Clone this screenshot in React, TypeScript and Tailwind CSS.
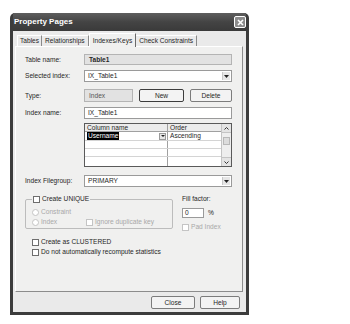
import type { ReactNode } from 'react';

function CheckBox({ disabled }: { disabled?: boolean }) {
  return (
    <span
      className={
        'inline-block h-[7px] w-[7px] shrink-0 border bg-white ' +
        (disabled ? 'border-[#c4c4c4]' : 'border-[#6e6e6e]')
      }
    />
  );
}

function Radio() {
  return <span className="inline-block h-[7px] w-[7px] shrink-0 rounded-full border border-[#c4c4c4] bg-white" />;
}

function Arrow() {
  return (
    <span className="flex h-full w-[8px] items-center justify-center border-l border-[#c8c8c8] bg-[#e6e6e6]">
      <svg width="5" height="3" viewBox="0 0 5 3">
        <path d="M0 0h5L2.5 3z" fill="#222" />
      </svg>
    </span>
  );
}

function Row({ label, children, className }: { label: string; children: ReactNode; className: string }) {
  return (
    <div className={'flex items-center ' + className}>
      <span className="w-[59px] shrink-0">{label}</span>
      {children}
    </div>
  );
}

function Combo({ value }: { value: string }) {
  return (
    <div className="flex h-full flex-1 items-center border border-[#9a9a9a] bg-white p-[1px]">
      <span className="flex-1 pl-[2px]">{value}</span>
      <Arrow />
    </div>
  );
}

function Btn({ label, def, w }: { label: string; def?: boolean; w: string }) {
  return (
    <div
      className={
        'flex h-full items-center justify-center rounded-[2px] bg-[#f3f3f3] ' +
        w +
        (def ? ' border-[1.5px] border-[#3c3c3c]' : ' border border-[#7c7c7c]')
      }
    >
      {label}
    </div>
  );
}

export default function App() {
  return (
    <div className="h-[324px] w-[350px] bg-white pl-[10px] pt-[13px] font-['Liberation_Sans',Arial,sans-serif] text-[6.6px] leading-[8px] text-[#262626]">
      <div className="flex h-[302px] w-[239px] flex-col rounded-t-[5px] bg-[#3c3c3c] px-[3px] pb-[3px]">
        {/* title bar */}
        <div className="flex h-[18px] shrink-0 items-center justify-between bg-gradient-to-b from-[#5e5e5e] via-[#444444] to-[#3a3a3a] pl-[1px]">
          <span className="text-[8px] font-bold text-white">Property Pages</span>
          <span className="flex h-[12px] w-[12px] items-center justify-center rounded-[2px] border border-white bg-[#8c8c8c]">
            <svg width="7" height="7" viewBox="0 0 7 7">
              <path d="M1 1l5 5M6 1L1 6" stroke="#fff" strokeWidth="1.6" />
            </svg>
          </span>
        </div>

        {/* body */}
        <div className="flex flex-1 flex-col bg-[#eaeaea] pl-[2px] pr-[3px] pt-[2px]">
          {/* tabs */}
          <div className="flex h-[13px] items-end pl-[2px]">
            <div className="flex h-[11px] items-center border-l border-t border-white border-r border-r-[#8a8a8a] px-[2px]">Tables</div>
            <div className="flex h-[11px] items-center border-t border-white border-r border-r-[#8a8a8a] px-[3px]">Relationships</div>
            <div className="relative z-10 -mb-[1px] flex h-[14px] items-center border-l border-t border-white border-r border-r-[#6a6a6a] bg-[#f0f0ef] px-[3px]">
              Indexes/Keys
            </div>
            <div className="flex h-[11px] items-center border-t border-white border-r border-r-[#8a8a8a] px-[3px]">Check Constraints</div>
          </div>

          {/* panel */}
          <div className="flex h-[246px] flex-col border border-l-white border-t-white border-r-[#8c8c8c] border-b-[#8c8c8c] bg-[#f0f0ef] pl-[9px] pr-[10px] pt-[7px]">
            <Row label="Table name:" className="h-[11px]">
              <div className="flex h-full flex-1 items-center border border-[#b4b4b4] bg-[#e2e2e2] pl-[4px] font-semibold">Table1</div>
            </Row>
            <Row label="Selected index:" className="mt-[5px] h-[12px]">
              <Combo value="IX_Table1" />
            </Row>
            <Row label="Type:" className="mt-[7px] h-[13px]">
              <div className="flex h-full w-[49px] items-center border border-[#b4b4b4] bg-[#e2e2e2] pl-[4px] text-[#555]">Index</div>
              <div className="ml-[6px] h-full">
                <Btn label="New" def w="w-[45px]" />
              </div>
              <div className="ml-[6px] h-full">
                <Btn label="Delete" w="w-[42px]" />
              </div>
            </Row>
            <Row label="Index name:" className="mt-[5px] h-[12px]">
              <div className="flex h-full flex-1 items-center border border-[#9a9a9a] bg-white pl-[3px]">IX_Table1</div>
            </Row>

            {/* column grid */}
            <div className="ml-[59px] mt-[4px] flex h-[44px] border border-[#5a5a5a] bg-white">
              <div className="flex flex-1 flex-col">
                <div className="flex h-[8px] border-b border-[#a0a0a0] bg-[#ececec]">
                  <span className="w-[83px] border-r border-[#a0a0a0] pl-[2px]">Column name</span>
                  <span className="flex-1 pl-[2px]">Order</span>
                </div>
                <div className="flex h-[9px] border-b border-[#d4d4d4]">
                  <span className="flex w-[83px] items-center border-r border-[#a0a0a0] pl-[2px] pr-[1px]">
                    <span className="bg-black px-[1px] text-white">Username</span>
                    <span className="flex-1" />
                    <span className="flex h-[7px] w-[7px] items-center justify-center border border-[#9a9a9a] bg-[#e6e6e6]">
                      <svg width="4" height="2" viewBox="0 0 4 2">
                        <path d="M0 0h4L2 2z" fill="#222" />
                      </svg>
                    </span>
                  </span>
                  <span className="flex flex-1 items-center pl-[2px]">Ascending</span>
                </div>
                <div className="flex h-[8px] border-b border-[#d4d4d4]">
                  <span className="w-[83px] border-r border-[#a0a0a0]" />
                </div>
                <div className="flex h-[8px] border-b border-[#d4d4d4]">
                  <span className="w-[83px] border-r border-[#a0a0a0]" />
                </div>
                <div className="flex flex-1">
                  <span className="w-[83px] border-r border-[#a0a0a0]" />
                </div>
              </div>
              <div className="flex w-[10px] flex-col border-l border-[#c4c4c4] bg-[#eeeeee]">
                <span className="flex h-[9px] items-center justify-center border-b border-[#c4c4c4] bg-[#e4e4e4]">
                  <svg width="5" height="3" viewBox="0 0 5 3">
                    <path d="M0.5 2.5L2.5 0.5L4.5 2.5" stroke="#333" fill="none" />
                  </svg>
                </span>
                <span className="mx-[1px] mt-[4px] h-[8px] border border-[#b8b8b8] bg-[#dcdcdc]" />
                <span className="flex-1" />
                <span className="flex h-[9px] items-center justify-center border-t border-[#c4c4c4] bg-[#e4e4e4]">
                  <svg width="5" height="3" viewBox="0 0 5 3">
                    <path d="M0.5 0.5L2.5 2.5L4.5 0.5" stroke="#333" fill="none" />
                  </svg>
                </span>
              </div>
            </div>

            <Row label="Index Filegroup:" className="mt-[8px] h-[12px]">
              <Combo value="PRIMARY" />
            </Row>

            {/* unique / fill factor */}
            <div className="mt-[8px] flex items-start">
              <fieldset className="w-[148px] rounded-[2px] border border-[#bcbcbc] pb-[2px] pl-[6px]">
                <legend className="flex items-center gap-[2px] px-[1px]">
                  <CheckBox />
                  <span>Create UNIQUE</span>
                </legend>
                <div className="mt-[5px] flex h-[8px] items-center gap-[2px] text-[#a8a8a8]">
                  <Radio />
                  <span>Constraint</span>
                </div>
                <div className="mt-[2px] flex h-[8px] items-center text-[#a8a8a8]">
                  <Radio />
                  <span className="ml-[2px] w-[45px]">Index</span>
                  <CheckBox disabled />
                  <span className="ml-[2px]">Ignore duplicate key</span>
                </div>
              </fieldset>
              <div className="ml-[9px] flex flex-col">
                <span className="h-[8px]">Fill factor:</span>
                <div className="mt-[5px] flex h-[10px] items-center">
                  <span className="flex h-full w-[22px] items-center border border-[#9a9a9a] bg-white pl-[2px]">0</span>
                  <span className="ml-[4px]">%</span>
                </div>
                <div className="mt-[5px] flex h-[8px] items-center gap-[2px] text-[#a8a8a8]">
                  <CheckBox disabled />
                  <span>Pad Index</span>
                </div>
              </div>
            </div>

            <div className="ml-[7px] mt-[7px] flex h-[8px] items-center gap-[2px]">
              <CheckBox />
              <span>Create as CLUSTERED</span>
            </div>
            <div className="ml-[7px] mt-[2px] flex h-[8px] items-center gap-[2px]">
              <CheckBox />
              <span>Do not automatically recompute statistics</span>
            </div>
          </div>

          {/* dialog buttons */}
          <div className="mt-[4px] flex h-[13px] justify-end pr-[3px]">
            <Btn label="Close" w="w-[44px]" />
            <div className="ml-[5px] h-full">
              <Btn label="Help" w="w-[40px]" />
            </div>
          </div>
        </div>
      </div>
    </div>
  );
}
